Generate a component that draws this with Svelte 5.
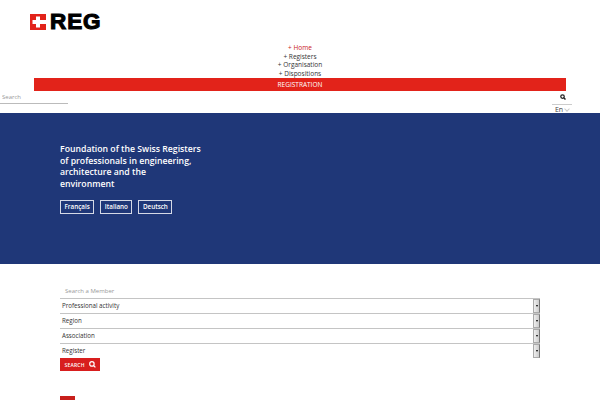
<script>
	const nav = ['Home', 'Registers', 'Organisation', 'Dispositions'];
	const langs = ['Français', 'Italiano', 'Deutsch'];
	const filters = ['Professional activity', 'Region', 'Association', 'Register'];
</script>

<header>
	<div class="logo">
		<svg width="20" height="16" viewBox="0 0 20 16">
			<rect width="16" height="16" fill="#e2231a" />
			<path d="M6 2.500h4v3.500h6v4h-6v3.500h-4v-3.500h-3.500v-4h3.500z" fill="#fff" />
		</svg>
		<span class="wordmark">REG</span>
	</div>
	<nav>
		{#each nav as item, i}
			<a href="#top" class:active={i === 0}>+ {item}</a>
		{/each}
	</nav>
	<a class="register" href="#top">REGISTRATION</a>
	<div class="tools">
		<input class="site-search" placeholder="Search" />
		<div class="tools-right">
			<svg class="tool-icon" width="6" height="6" viewBox="0 0 12 12">
				<circle cx="5" cy="5" r="3.500" fill="none" stroke="#222" stroke-width="2.500" />
				<path d="M7.500 7.500l3.500 3.500" stroke="#222" stroke-width="3" />
			</svg>
			<div class="lang">En <span class="chev"></span></div>
		</div>
	</div>
</header>

<section class="hero">
	<h1>Foundation of the Swiss Registers of professionals in engineering, architecture and the<br />environment</h1>
	<div class="langs">
		{#each langs as lang}
			<a href="#top">{lang}</a>
		{/each}
	</div>
</section>

<section class="members">
	<div class="member-title">Search a Member</div>
	{#each filters as filter}
		<div class="select">
			<span>{filter}</span>
			<span class="arrow"></span>
		</div>
	{/each}
	<button>
		SEARCH
		<svg width="7" height="7" viewBox="0 0 12 12">
			<circle cx="5" cy="5" r="3.800" fill="none" stroke="#fff" stroke-width="2" />
			<path d="M8 8l3 3" stroke="#fff" stroke-width="2.200" />
		</svg>
	</button>
	<div class="red-tab"></div>
</section>

<style>
	:global(body) {
		margin: 0;
		background: #fff;
		font-family: "Open Sans", sans-serif;
		overflow: hidden;
	}

	header {
		display: flex;
		flex-direction: column;
		height: 113px;
	}

	.logo {
		display: flex;
		align-items: center;
		height: 16px;
		margin: 14px 0 0 30px;
	}

	.wordmark {
		font-family: "Liberation Sans", sans-serif;
		font-weight: 700;
		font-size: 22.500px;
		line-height: 16px;
		letter-spacing: 0.9px;
		color: #000;
		-webkit-text-stroke: 1.100px #000;
	}

	nav {
		display: flex;
		flex-direction: column;
		align-items: center;
		margin-top: 14px;
		font-size: 6.500px;
		font-weight: 500;
		line-height: 8.500px;
	}

	nav a {
		color: #333;
		text-decoration: none;
	}

	nav a.active {
		color: #c8201c;
	}

	.register {
		display: block;
		margin: 0 34px;
		height: 13px;
		background: #e2231a;
		color: #fff;
		font-size: 6.500px;
		font-weight: 500;
		line-height: 13px;
		text-align: center;
		text-decoration: none;
	}

	.tools {
		display: flex;
		justify-content: space-between;
	}

	.site-search {
		box-sizing: border-box;
		width: 68px;
		height: 13px;
		padding: 0 2px;
		border: 0;
		border-bottom: 1px solid #bbb;
		font: 6px "Open Sans", sans-serif;
	}

	.site-search::placeholder {
		color: #999;
	}

	.tools-right {
		display: flex;
		flex-direction: column;
		align-items: center;
		width: 20px;
		margin-right: 28px;
	}

	.tool-icon {
		margin: 3px 0 4px 2px;
	}

	.lang {
		display: flex;
		justify-content: center;
		align-items: center;
		gap: 2px;
		width: 100%;
		height: 9px;
		border-top: 1px solid #ccc;
		font-size: 7px;
		color: #444;
	}

	.chev {
		width: 3px;
		height: 3px;
		margin-top: -2px;
		border-right: 1px solid #ccc;
		border-bottom: 1px solid #ccc;
		transform: rotate(45deg);
	}

	.hero {
		box-sizing: border-box;
		height: 151px;
		padding: 31px 60px 0;
		background: #1f3778;
		color: #fff;
	}

	h1 {
		width: 150px;
		margin: 0;
		font-size: 8.700px;
		font-weight: 600;
		line-height: 11.700px;
	}

	.langs {
		display: flex;
		gap: 6px;
		margin-top: 9px;
	}

	.langs a {
		padding: 0 3.500px;
		border: 1px solid #d5d9e6;
		color: #fff;
		font-size: 6.300px;
		font-weight: 600;
		line-height: 12px;
		text-decoration: none;
	}

	.members {
		display: flex;
		flex-direction: column;
		align-items: flex-start;
		padding: 22px 60px 0;
	}

	.member-title {
		height: 12px;
		padding-left: 5px;
		font-size: 6px;
		line-height: 11px;
		color: #999;
	}

	.select {
		box-sizing: border-box;
		display: flex;
		justify-content: space-between;
		align-items: center;
		width: 480px;
		height: 15px;
		padding: 0 0 0 2px;
		border-top: 1px solid #c4c4c4;
		font-size: 6.200px;
		font-weight: 500;
		color: #333;
	}

	.select span:first-child {
		margin-top: -1px;
	}

	.select:last-of-type {
		height: 16px;
		border-bottom: 1px solid #c4c4c4;
	}

	.arrow {
		display: flex;
		align-items: center;
		justify-content: center;
		width: 7px;
		height: 100%;
		background: linear-gradient(to right, #eee, #ccc);
		border: 1px solid #aaa;
		border-right-color: #777;
		box-sizing: border-box;
	}

	.arrow::after {
		content: "";
		border: 1.500px solid transparent;
		border-top: 2px solid #000;
		border-bottom: 0;
	}

	button {
		display: flex;
		align-items: center;
		gap: 4px;
		height: 13px;
		padding: 0 4.500px;
		border: 0;
		background: #d81e1e;
		color: #fff;
		font: 600 5px "Open Sans", sans-serif;
		letter-spacing: 0.2px;
	}

	.red-tab {
		width: 15px;
		height: 10px;
		margin-top: 25px;
		background: #c8201c;
	}
</style>
